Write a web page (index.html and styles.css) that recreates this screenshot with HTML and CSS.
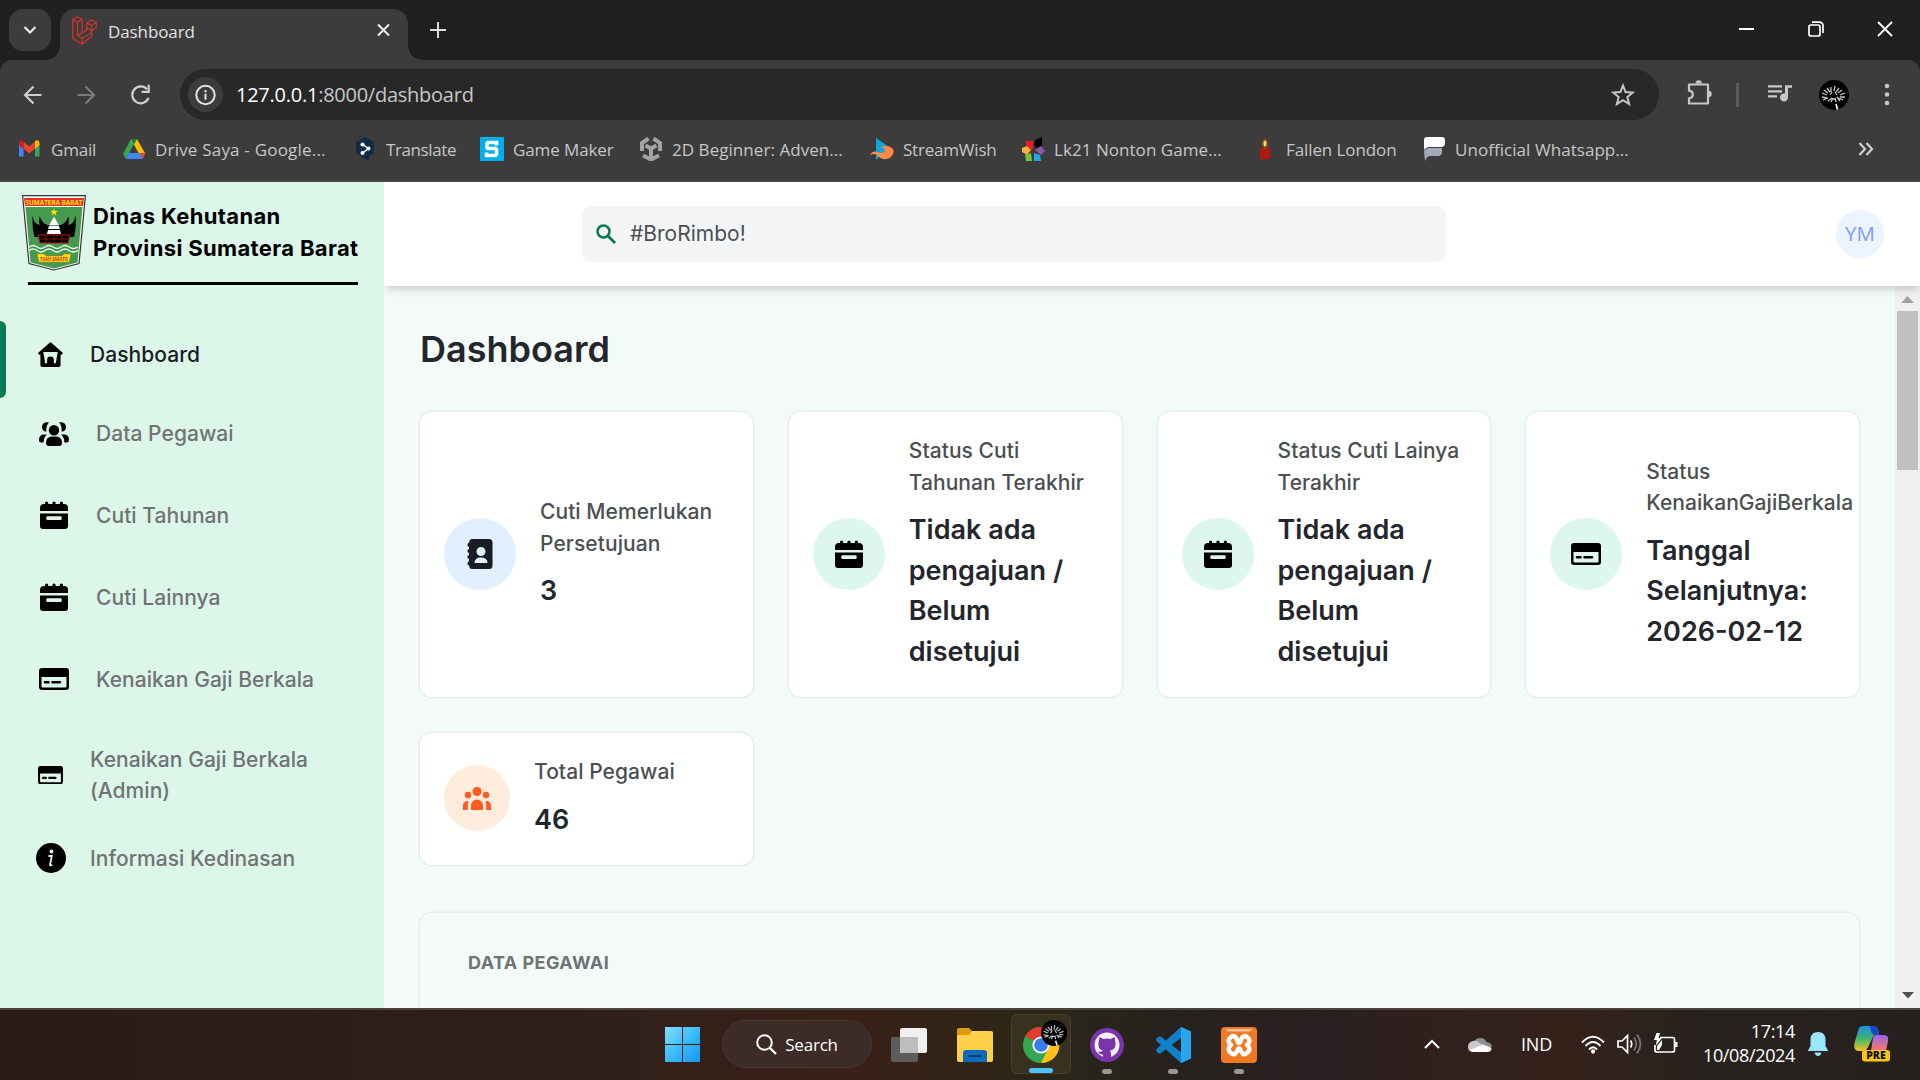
FILE: index.html
```html
<!DOCTYPE html>
<html lang="id">
<head>
<meta charset="utf-8">
<title>Dashboard</title>
<link rel="stylesheet" href="styles.css">
</head>
<body>
<svg class="defs" width="0" height="0">
  <defs>
    <symbol id="calendar" viewBox="0 0 28 28">
      <path d="M5 4.500V2a1.600 1.600 0 0 1 3.200 0V3h4.200V2a1.600 1.600 0 0 1 3.200 0V3h4.200V2A1.600 1.600 0 0 1 23 2v1h1a4 4 0 0 1 4 4v3H0V7a4 4 0 0 1 4-4h1z"/>
      <path fill-rule="evenodd" d="M0 12.500h28V25a3 3 0 0 1-3 3H3a3 3 0 0 1-3-3zM7.500 15.300a1.200 1.200 0 0 0-1.200 1.200v1.200a1.200 1.200 0 0 0 1.200 1.200h13a1.200 1.200 0 0 0 1.200-1.200v-1.200a1.200 1.200 0 0 0-1.200-1.200z"/>
    </symbol>
    <symbol id="card" viewBox="0 0 30 22">
      <path fill-rule="evenodd" d="M3 0h24a3 3 0 0 1 3 3v16a3 3 0 0 1-3 3H3a3 3 0 0 1-3-3V3a3 3 0 0 1 3-3zM2.500 9v9.500a1 1 0 0 0 1 1h23a1 1 0 0 0 1-1V9z"/>
      <path d="M6 14.300h3.500M13.500 14.300h7.500" stroke="currentColor" stroke-width="2.600" stroke-linecap="round"/>
    </symbol>
    <symbol id="bloom" viewBox="0 0 30 30">
      <circle cx="15" cy="15" r="15" fill="#000"/>
      <path d="M17 24l1.500 5.500" fill="none" stroke="#f0f0f0" stroke-width="1.800"/>
      <path d="M3 17l5 1M4 20l5-2M3 13l5 2M5 10l4 3M8 8l3 4M12 7l0 5M16 6l-1 5M20 8l-3 4M23 10l-4 3M26 13l-5 2M26 17l-5 0M24 20l-4-2M9 21l4-3M12 22l2-4M17 22l-1-4M21 21l-3-4M11 15l2-3M18 15l-2-3M13 19l4 0" fill="none" stroke="#c8c8c8" stroke-width="1.300"/>
    </symbol>
  </defs>
</svg>

<header class="tabstrip">
  <div class="tab-search"><svg width="16" height="16" viewBox="0 0 16 16"><path d="M2.500 5L8 10.500 13.500 5" fill="none" stroke="#e8e8e8" stroke-width="2.200"/></svg></div>
  <div class="tab">
    <svg width="25" height="29" viewBox="0 0 25 29" fill="none" stroke="#dd3329" stroke-width="1.100" stroke-linejoin="round"><path d="M.8 3.500L5.500 1l4.700 2.500v13.200l4.600-2.600V6.700l4.800-2.600 4.600 2.600v5.400l-4.600 2.700v5.300L10.200 28 .8 22.600zM.8 3.500L5.500 6.200l4.700-2.700M5.500 6.200v13.400l4.700 2.600 9.400-5.400M10.200 22.200V28M14.800 6.700l4.800 2.700 4.600-2.700M19.600 9.400v5.400M14.800 12.100l4.800 2.700M5.500 19.600l4.700-2.900"/></svg>
    <span class="tab-title">Dashboard</span>
    <svg width="13" height="14" viewBox="0 0 13 14"><path d="M1 1.500l11 11M12 1.500l-11 11" stroke="#eee" stroke-width="2"/></svg>
  </div>
  <svg class="new-tab" width="16" height="16" viewBox="0 0 16 16"><path d="M8 0v16M0 8h16" stroke="#ddd" stroke-width="2"/></svg>
  <div class="window-buttons">
    <svg width="16" height="16" viewBox="0 0 16 16"><path d="M0 8h15" stroke="#fff" stroke-width="2"/></svg>
    <svg width="16" height="16" viewBox="0 0 16 16" fill="none" stroke="#fff" stroke-width="1.700"><rect x="1" y="4" width="11" height="11" rx="2"/><path d="M4 1.200h7.500a3.500 3.500 0 0 1 3.500 3.500V12"/></svg>
    <svg width="16" height="16" viewBox="0 0 16 16"><path d="M1 1l14 14M15 1L1 15" stroke="#fff" stroke-width="1.800"/></svg>
  </div>
</header>

<div class="toolbar">
  <svg class="nav-btn" width="20" height="22" viewBox="0 0 20 22" fill="none" stroke="#d0d0d0" stroke-width="2.200"><path d="M18.500 11H2M10.500 2.500L2 11l8.500 8.500"/></svg>
  <svg class="nav-btn" width="20" height="22" viewBox="0 0 20 22" fill="none" stroke="#7b7b7b" stroke-width="2.200"><path d="M.5 11H17M8.500 2.500L17 11l-8.500 8.500"/></svg>
  <svg class="nav-btn" width="20" height="22" viewBox="0 0 20 22"><path d="M17.500 14A8.400 8.400 0 1 1 16 5.300" fill="none" stroke="#d0d0d0" stroke-width="2.200"/><path d="M18.800 .8V9h-8.200V6.800h6V.8z" fill="#d0d0d0"/></svg>
  <div class="omnibox">
    <span class="site-info"><svg width="21" height="24" viewBox="0 0 21 24"><circle cx="10.500" cy="12" r="9.200" fill="none" stroke="#e3e3e3" stroke-width="2"/><path d="M10.500 10.800v6M10.500 7v2.300" stroke="#e3e3e3" stroke-width="2"/></svg></span>
    <span class="url"><b>127.0.0.1</b>:8000/dashboard</span>
    <svg width="24" height="24" viewBox="0 0 24 24"><path d="M12 2.500l2.600 6.500 7.200.5-5.500 4.600 1.800 7-6.100-3.900-6.100 3.900 1.800-7-5.500-4.600 7.200-.5z" fill="none" stroke="#c7c7c7" stroke-width="2"/></svg>
  </div>
  <svg class="ext" width="26" height="26" viewBox="0 0 26 26"><path d="M3 4.500h19v19H3v-5.200c5-.6 5-7 0-7.600z" fill="none" stroke="#c7c7c7" stroke-width="2.200" stroke-linejoin="round"/><path d="M9.500 3.500a3.200 3.200 0 0 1 6.400 0zM22.500 10.800a3.200 3.200 0 0 1 0 6.400z" fill="#c7c7c7"/></svg>
  <i class="divider"></i>
  <svg class="media" width="24" height="20" viewBox="0 0 24 20"><path d="M0 2.300h14M0 7.300h14M0 12.300h9" stroke="#c7c7c7" stroke-width="2.200"/><path d="M17 1.200h7v2.600h-4v9.700a4 4 0 1 1-3-3.900z" fill="#c7c7c7"/></svg>
  <svg class="profile" width="30" height="30"><use href="#bloom"/></svg>
  <svg class="more" width="6" height="24" viewBox="0 0 6 24" fill="#c7c7c7"><circle cx="3" cy="3" r="2.300"/><circle cx="3" cy="11.500" r="2.300"/><circle cx="3" cy="20" r="2.300"/></svg>
</div>

<nav class="bookmarks">
  <a><svg viewBox="0 0 24 24"><path d="M1 7v12.500h4.500V10z" fill="#4285f4"/><path d="M21.500 7v12.500H17V10z" fill="#34a853"/><path d="M1 8V6.500a2.500 2.500 0 0 1 4.500-2v8z" fill="#c5221f"/><path d="M5.500 4.700l5.800 4.800 5.700-4.800v7l-5.700 4.500-5.800-4.500z" fill="#ea4335"/><path d="M21.500 8V6.500a2.500 2.500 0 0 0-4.500-2v7.200z" fill="#fbbc04"/></svg><span>Gmail</span></a>
  <a><svg viewBox="0 0 24 24"><path d="M9 2h6l-8 14-3 6-3-5z" fill="#34a853"/><path d="M9 2h6l8.500 15H17z" fill="#fbbc04"/><path d="M7 16h16.500l-3 6H4z" fill="#4285f4"/><path d="M18 16h5.500l-3 6z" fill="#ea4335"/><path d="M9 2h6l-3 5.500z" fill="#188038"/></svg><span class="wider">Drive Saya - Google...</span></a>
  <a><svg viewBox="0 0 24 24"><path d="M12 0l9 5v11l-5 3v5l-5-3-8-5V5z" fill="#0f2b46"/><path d="M9.500 7.500l6 4-6 4.500" stroke="#fff" fill="none" stroke-width="1.400"/><g fill="#fff"><circle cx="9.500" cy="7.500" r="2"/><circle cx="15.500" cy="11.500" r="2"/><circle cx="9.500" cy="16" r="2"/></g></svg><span class="tight">Translate</span></a>
  <a><svg viewBox="0 0 24 24"><path d="M0 0h24v24H0z" fill="#00aeef"/><path d="M16.500 8.500V5.500H8l-1 1v4l1 1h7.500l1 1v5l-1 1H6.500V15.500" fill="none" stroke="#fff" stroke-width="3.600"/></svg><span class="snug">Game Maker</span></a>
  <a><svg viewBox="0 0 24 24" fill="none" stroke="#a3a3a3" stroke-width="4"><path d="M9.500 1.500L3 6v8M14.500 1.500L21 6v8M4 18.500l8 4 8-4M12 21v-9.500L6.500 8.500M12 11.500l5.500-3"/></svg><span class="wide">2D Beginner: Adven...</span></a>
  <a><svg viewBox="0 0 24 24"><path d="M6 1l13 9-13 13z" fill="#12a7d8"/><path d="M0 18c5-8 9 1 14-3 2-2 0-4-3-5 8-3 15 2 12 7-3 7-12 6-15 2-3-3-5-2-8-1z" fill="#ff8a45"/></svg><span>StreamWish</span></a>
  <a><svg viewBox="0 0 24 24"><path d="M5 4h7v7l-2 2-5-5z" fill="#ed1c24"/><path d="M14 3l7-3v9l-5 2-3-3z" fill="#000"/><path d="M1 11l5-2 4 4-4 5-5-3z" fill="#fbb03b"/><path d="M14 13l6-4 4 5-4 4z" fill="#8e5aa8"/><path d="M10 16l1 8H5l-1-6z" fill="#7ac143"/><path d="M13 16l6 2 1 6h-7z" fill="#1cade4"/></svg><span class="wide">Lk21 Nonton Game...</span></a>
  <a><svg viewBox="0 0 24 24"><path d="M7 11l10-1v12H7z" fill="#b5140f"/><ellipse cx="12" cy="7" rx="3.500" ry="5.500" fill="#74491e"/><ellipse cx="12" cy="6.500" rx="1.500" ry="3" fill="#ffd37a"/></svg><span class="snug">Fallen London</span></a>
  <a><svg viewBox="0 0 24 24"><path d="M2 3q0-3 3-3h15q3 0 3 3v3q0 4-4 4H8q-4 0-6 3z" fill="#fff"/><path d="M2 14q2-3 5-3h13v4q0 4-4 4H8q-3 0-5 5z" fill="#a3abbb"/></svg><span class="wide">Unofficial Whatsapp...</span></a>
  <svg class="overflow" width="16" height="14" viewBox="0 0 16 14"><path d="M1.500 1l5.500 6-5.500 6M8.500 1l5.500 6-5.500 6" fill="none" stroke="#d0d0d0" stroke-width="2.200"/></svg>
</nav>

<div class="page">
  <aside class="sidebar">
    <div class="brand">
      <svg width="64" height="76" viewBox="0 0 64 76">
        <path d="M.6 .6h62.800L57 68.500 32 75 7 68.500z" fill="#fff" stroke="#333" stroke-width="1.200"/>
        <path d="M2 3h60l-1 8H3z" fill="#ee2b2b"/>
        <path d="M3.500 12h57L55.500 67.500 32 73.500 8.500 67.500z" fill="#469a50"/>
        <text x="32" y="9.600" textLength="57" lengthAdjust="spacingAndGlyphs" text-anchor="middle" class="crest-label">SUMATERA BARAT</text>
        <path d="M32 13.500l1 2.600h2.700l-2.200 1.700.9 2.700-2.400-1.700-2.400 1.700.9-2.700-2.200-1.700H31z" fill="#ffe600"/>
        <path d="M10.500 20q1 9 7 10-.5-4 0-9 2 7 8 9h13q6-2 8-9 .5 5 0 9 6-1 7-10 1 13-1.500 22h-39.500Q10 33 10.500 20z"/>
        <path d="M32 21.500l5 9h-10zM27 31h10l1 3H26zM26 35h12l1 4H25z" fill="#fff"/>
        <path d="M16 40h32l-2 8H18z" stroke="#b51216" stroke-width="1"/>
        <path d="M16 44h32M24 40v8M32 40v8M40 40v8" stroke="#b51216" stroke-width=".7"/>
        <path d="M7 52q4-3 8 0t8 0 8 0 8 0 8 0 9 0M7 55.500q4-3 8 0t8 0 8 0 8 0 8 0 9 0" fill="none" stroke="#e9fff0" stroke-width="1.300"/>
        <path d="M15 59h7l2 2h16l2-2h7l-2 8H17z" fill="#ffde17" stroke="#b98a00" stroke-width=".5"/>
        <text x="32" y="66" textLength="28" lengthAdjust="spacingAndGlyphs" text-anchor="middle" class="crest-motto">TUAH SAKATO</text>
      </svg>
      <div class="brand-name">Dinas Kehutanan<br><span>Provinsi Sumatera Barat</span></div>
    </div>
    <hr class="rule">
    <div class="menu">
      <a class="item active h78"><svg class="ic-s" viewBox="0 0 26 26"><path fill-rule="evenodd" d="M13 0l13 11.500-1.500 2L23.500 12.800V24a2 2 0 0 1-2 2h-17a2 2 0 0 1-2-2V12.800l-1 .7L0 11.500zM5.500 10.500L7.500 22h2v-3.500Q9.500 15 13 15t3.500 3.500V22h2l2-11.500z"/></svg><span>Dashboard</span></a>
      <a class="item h81"><svg class="ic-l" viewBox="0 0 30 24"><circle cx="15" cy="8.300" r="5.200"/><path d="M7 21q0-6.500 6-6.500h4q6 0 6 6.500 0 3-3 3H10q-3 0-3-3z"/><path d="M3 5.500A5 5 0 0 1 10 .6Q7 3.500 7.300 9.700A5 5 0 0 1 3 5.500zM27 5.500A5 5 0 0 0 20 .6q3 2.900 2.700 9.100A5 5 0 0 0 27 5.500zM0 18q0-5.500 5-5.500h3q-3.500 3-3.300 8H2.500Q0 20.500 0 18zM30 18q0-5.500-5-5.500h-3q3.500 3 3.300 8h2.200q2.500 0 2.500-2.500z"/></svg><span>Data Pegawai</span></a>
      <a class="item h82"><svg class="ic-l" viewBox="-1 -1 30 30"><use href="#calendar" width="28" height="28"/></svg><span>Cuti Tahunan</span></a>
      <a class="item h82"><svg class="ic-l" viewBox="-1 -1 30 30"><use href="#calendar" width="28" height="28"/></svg><span>Cuti Lainnya</span></a>
      <a class="item h82"><svg class="ic-l" viewBox="0 0 30 22"><use href="#card" width="30" height="22"/></svg><span>Kenaikan Gaji Berkala</span></a>
      <a class="item h109"><svg class="ic-s" viewBox="0 0 30 22"><use href="#card" width="30" height="22"/></svg><span>Kenaikan Gaji Berkala<br>(Admin)</span></a>
      <a class="item info h58"><svg class="ic-l" viewBox="0 0 30 30"><circle cx="15" cy="15" r="15"/><circle cx="15.500" cy="8.500" r="1.900" fill="#dcf6ea"/><path d="M12.500 13h3.300l-1.800 9q0 1 2.200-.3" fill="none" stroke="#dcf6ea" stroke-width="1.800"/></svg><span>Informasi Kedinasan</span></a>
    </div>
  </aside>

  <div class="main">
    <div class="topbar">
      <div class="search"><svg width="20" height="20" viewBox="0 0 20 20"><circle cx="7.500" cy="7.500" r="6" fill="none" stroke="#057a55" stroke-width="2.500"/><path d="M12 12l7 7" stroke="#057a55" stroke-width="2.800"/></svg><span>#BroRimbo!</span></div>
      <div class="avatar">YM</div>
    </div>
    <div class="scroll-area">
      <div class="content">
        <h1>Dashboard</h1>
        <div class="cards">
          <div class="card">
            <span class="bubble blue"><svg width="26" height="32" viewBox="0 0 26 32"><path fill="#1a1c23" fill-rule="evenodd" d="M5 1h17q3.500 0 3.500 3.500v23Q25.500 31 22 31H5q-2.500 0-3-3.500L.5 26.500v-2L2 23v-2L.5 20v-2L2 17v-2L.5 14v-2L2 11V9L.5 8V6L2 4.500Q2.500 1 5 1zM14 9a4.300 4.300 0 0 0 0 9 4.300 4.300 0 0 0 0-9zM7.500 25h13q0-5.500-6.500-5.500T7.500 25z"/></svg></span>
            <div><p>Cuti Memerlukan Persetujuan</p><strong>3</strong></div>
          </div>
          <div class="card">
            <span class="bubble green"><svg width="28" height="28"><use href="#calendar"/></svg></span>
            <div><p>Status Cuti Tahunan Terakhir</p><strong>Tidak ada pengajuan / Belum disetujui</strong></div>
          </div>
          <div class="card">
            <span class="bubble green"><svg width="28" height="28"><use href="#calendar"/></svg></span>
            <div><p>Status Cuti Lainya Terakhir</p><strong>Tidak ada pengajuan / Belum disetujui</strong></div>
          </div>
          <div class="card">
            <span class="bubble green"><svg width="30" height="22"><use href="#card"/></svg></span>
            <div><p>Status KenaikanGajiBerkala</p><strong>Tanggal Selanjutnya: 2026-02-12</strong></div>
          </div>
          <div class="card">
            <span class="bubble orange"><svg width="28" height="23" viewBox="0 0 28 23" fill="#ff5a1f"><circle cx="14" cy="4.500" r="4.500"/><circle cx="5" cy="8" r="3.200"/><circle cx="23" cy="8" r="3.200"/><path d="M8 23v-4.500a6 6 0 0 1 12 0V23zM0 23v-4.500Q0 13.700 5.500 14 4.800 16 4.800 18.500V23zM28 23v-4.500q0-4.800-5.500-4.500.7 2 .7 4.500V23z"/></svg></span>
            <div><p>Total Pegawai</p><strong>46</strong></div>
          </div>
        </div>
        <section class="panel"><h2>Data Pegawai</h2></section>
      </div>
      <div class="scrollbar">
        <svg width="13" height="7" viewBox="0 0 13 7"><path d="M0 7l6.500-7L13 7z" fill="#a3a3a3"/></svg>
        <i class="thumb"></i>
        <svg width="12" height="7" viewBox="0 0 12 7"><path d="M0 0h12L6 6.500z" fill="#505050"/></svg>
      </div>
    </div>
  </div>
</div>

<footer class="taskbar">
  <div class="apps">
    <span class="app start"><svg width="35" height="35" viewBox="0 0 35 35"><defs><linearGradient id="win" x1="0" y1="0" x2="1" y2="1"><stop offset="0" stop-color="#86dcff"/><stop offset=".5" stop-color="#3bbcf8"/><stop offset="1" stop-color="#1296f5"/></linearGradient></defs><path d="M0 0h17v17H0zM18 0h17v17H18zM0 18h17v17H0zM18 18h17v17H18z" fill="url(#win)"/></svg></span>
    <span class="task-search"><svg width="21" height="21" viewBox="0 0 21 21"><circle cx="8.500" cy="8.500" r="7.300" fill="none" stroke="#fff" stroke-width="2"/><path d="M13.700 13.700l6.300 6.300" stroke="#fff" stroke-width="2.300"/></svg>Search</span>
    <span class="app"><svg width="36" height="34" viewBox="0 0 36 34"><rect y="9" width="27" height="25" rx="2" fill="#5c5c5c"/><rect x="9" width="27" height="25" rx="2" fill="#f0f0f0"/><path d="M9 9h18v16H9z" fill="#bdbdbd"/></svg></span>
    <span class="app"><svg width="36" height="34" viewBox="0 0 36 34"><path d="M0 2q0-2 2-2h10l4 4v6H0z" fill="#dc9c0c"/><path d="M0 7h12l3-4h19q2 0 2 2v27q0 2-2 2H2q-2 0-2-2z" fill="#ffd04a"/><path d="M6 34V25q0-3 3-3h18q3 0 3 3v9z" fill="#0f6cbd"/><path d="M11 28h14" stroke="#063f74" stroke-width="2"/></svg></span>
    <span class="app current"><svg width="46" height="44" viewBox="0 0 46 44"><g transform="translate(19 26)"><circle r="18" fill="#34a853"/><path d="M0 0L-15.600-9A18 18 0 0 1 15.600-9L8-8z" fill="#e33b2e"/><path d="M0 0V-8h16.500A18 18 0 0 1 0 18l7-14z" fill="#fbc116"/><circle r="8.600" fill="#fff"/><circle r="6.800" fill="#3b7ded"/></g><use href="#bloom" x="19" y="1" width="26" height="26"/></svg></span>
    <span class="app running"><svg width="34" height="34" viewBox="0 0 34 34"><circle cx="17" cy="17" r="17" fill="#7b35ab"/><circle cx="17" cy="17" r="12.500" fill="#f4f0f7"/><path d="M9.500 9l4 2q3.500-1 7 0l4-2 .8 5q1.500 7-5.300 8.500 1 1.500 1 3V30h-8v-3.500q-4 .5-5-3 3 1 5-.9Q7 21 8.700 14z" fill="#7b35ab"/></svg></span>
    <span class="app running"><svg width="36" height="36" viewBox="0 0 36 36"><path d="M26 0l10 4.500v27L26 36 2 14.500q-2-1.500 0-3.500l1.500-1.200q1-.8 2.500 0L27 26V10L6 26q-1.500 1-2.500.2L2 25q-2-2 0-3.500z" fill="#1180c8"/><path d="M26 0l10 4.500v27L26 36z" fill="#2aa5f2"/></svg></span>
    <span class="app running"><svg width="36" height="36" viewBox="0 0 36 36"><rect width="36" height="36" rx="4" fill="#f07a24"/><path d="M4 2h28l-3 2.500H7z" fill="#f8c197"/><path d="M10 10q4-3 6 3t4 0 6-3q5 4 0 8 5 4 0 8-4 3-6-2t-4 0-6 2q-5-4 0-8-5-4 0-8z" fill="none" stroke="#fff" stroke-width="4.500" stroke-linejoin="round"/></svg></span>
  </div>
  <div class="tray">
    <svg width="16" height="10" viewBox="0 0 16 10"><path d="M1 9l7-7 7 7" fill="none" stroke="#fff" stroke-width="2"/></svg>
    <svg class="cloud" width="24" height="16" viewBox="0 0 24 16"><path d="M6 5.500A7 7 0 0 1 18.500 6Q24 7 24 11L10 14z" fill="#8f8f8f"/><path d="M5 5a6 6 0 0 1 6 1.500l8 5L4 16q-4-1-4-5.500T5 5z" fill="#c9c9c9"/><path d="M2 14l13-5.500 8.500 3.500q0 4-4.500 4H5q-2 0-3-2z" fill="#fff"/></svg>
    <span class="lang">IND</span>
    <svg class="wifi" width="24" height="19" viewBox="0 0 24 19" fill="none" stroke="#fff" stroke-width="1.900"><path d="M1 7.500q11-11.500 22 0M4.500 11q7.500-8 15 0M8 14.500q4-4.500 8 0"/><circle cx="12" cy="16.500" r="1.200" fill="#fff"/></svg>
    <svg class="sound" width="25" height="22" viewBox="0 0 25 22" fill="none" stroke="#fff" stroke-width="1.700"><path d="M1 8h4l5.500-5.500v17L5 14H1zM13.500 7.500q2.500 3.500 0 7"/><path d="M17 4.500q4.500 6.500 0 13M20 1.500q7 9.500 0 19" stroke="#777"/></svg>
    <svg class="battery" width="25" height="21" viewBox="0 0 25 21"><path d="M7 4.500h12.500q2 0 2 2v10.500q0 2-2 2H4q-2 0-2-2V12" fill="none" stroke="#fff" stroke-width="1.700"/><path d="M22 9h2.500v5H22zM4 17V13l5-6v5l-3 5zM3.500 0L1 7h3l-1.500 6L9 5H5.500L7 0z" fill="#fff"/></svg>
    <div class="clock">17:14<br><span>10/08/2024</span></div>
    <svg class="bell" width="20" height="24" viewBox="0 0 20 24" fill="#99e6ff"><path d="M10 0q7.500 0 7.500 8v6l2.500 4.500V19H0v-.5L2.500 14V8Q2.500 0 10 0zM6.500 20.500h7q-1 3.500-3.500 3.500t-3.500-3.500z"/></svg>
    <svg class="copilot" width="36" height="36" viewBox="0 0 36 36"><defs><linearGradient id="cpa" x1="0" y1="0" x2="0" y2="1"><stop offset="0" stop-color="#1f8fe8"/><stop offset=".5" stop-color="#3fb56f"/><stop offset="1" stop-color="#f4c51d"/></linearGradient><linearGradient id="cpb" x1="0" y1="0" x2="0" y2="1"><stop offset="0" stop-color="#9a63f0"/><stop offset="1" stop-color="#ff7a58"/></linearGradient></defs><path d="M9 0h10q5 0 6 8l-5 1-5 10q-2 6-7 6H5Q-1 25 .5 17L4 5q1-5 5-5z" fill="url(#cpa)"/><path d="M16 0h4q4 0 5 9h-4q-4 0-5-9z" fill="#1746c9"/><path d="M22 9h8q5 0 4 6l-2 10H17l2-13q1-3 3-3z" fill="url(#cpb)"/><rect x="8" y="24" width="28" height="11.500" rx="3" fill="#fdc60b"/><text x="22" y="33" text-anchor="middle" class="pre">PRE</text></svg>
  </div>
</footer>
</body>
</html>
```
FILE: styles.css
```css
* { box-sizing: border-box; }
body {
  margin: 0;
  width: 1920px;
  height: 1080px;
  overflow: hidden;
  display: flex;
  flex-direction: column;
  background: #1f2121;
  font-family: "Open Sans", "Noto Sans", sans-serif;
}
svg { flex: none; display: block; }
.defs { position: absolute; }

/* Browser chrome */
.tabstrip { height: 60px; flex: none; display: flex; align-items: flex-start; padding: 9px 20px 0 9px; background: #1f2121; }
.tab-search { width: 42px; height: 42px; border-radius: 14px; background: #3c3c3c; display: flex; align-items: center; justify-content: center; }
.tab-search svg { margin-top: -1px; }
.tab { position: relative; width: 348px; height: 51px; margin-left: 9px; padding: 0 18px 9px 12px; background: #3c3c3c; border-radius: 15px 15px 0 0; display: flex; align-items: center; }
.tab::before, .tab::after { content: ""; position: absolute; bottom: 0; width: 14px; height: 14px; }
.tab::before { left: -14px; background: radial-gradient(circle at 0 0, transparent 13.500px, #3c3c3c 14px); }
.tab::after { right: -14px; background: radial-gradient(circle at 100% 0, transparent 13.500px, #3c3c3c 14px); }
.tab-title { flex: 1; margin-left: 11px; padding-top: 2px; font-size: 17px; letter-spacing: -.1px; color: #e3e3e3; }
.new-tab { margin: 13px 0 0 22px; }
.window-buttons { display: flex; gap: 53px; margin: 12px 7px 0 auto; }

.toolbar { height: 69px; flex: none; display: flex; align-items: center; padding: 0 30px 0 23px; background: #3c3c3c; border-radius: 12px 12px 0 0; }
.nav-btn { margin-right: 34px; }
.nav-btn:nth-child(3) { margin-right: 29px; }
.omnibox { width: 1479px; height: 51px; flex: none; border-radius: 26px; background: #282828; display: flex; align-items: center; padding: 0 24px 0 8px; }
.site-info { width: 35px; height: 35px; border-radius: 50%; background: #3c3c3c; display: flex; align-items: center; justify-content: center; }
.url { flex: 1; margin-left: 13px; font-size: 20px; letter-spacing: -.25px; color: #c7c7c7; }
.url b { font-weight: 400; color: #fff; }
.ext { margin: -3px 0 0 27px; }
.divider { width: 3px; height: 24px; margin: 0 29px 0 24px; background: #5c5c5c; border-radius: 1px; }
.media { margin-right: 27px; margin-top: -2px; }
.profile { margin-right: auto; }

.bookmarks { height: 53px; flex: none; display: grid; grid-template-columns: 104px 231px 127px 159px 231px 151px 232px 169px 1fr 16px; align-items: center; padding: 0 46px 11px 18px; background: #3c3c3c; border-bottom: 2px solid #484646; }
.bookmarks a { display: flex; align-items: center; gap: 9px; white-space: nowrap; font-size: 17px; letter-spacing: -.2px; color: #c7c7c7; }
.bookmarks a svg { width: 24px; height: 24px; }
.bookmarks .wider { letter-spacing: .2px; }
.bookmarks .wide { letter-spacing: .05px; }
.bookmarks .snug { letter-spacing: -.1px; }
.bookmarks .tight { letter-spacing: -.4px; }

/* Application */
.page { height: 826px; flex: none; display: flex; font-family: Inter, "Liberation Sans", sans-serif; }
.sidebar { width: 384px; flex: none; background: #dcf6ea; }
.brand { display: flex; padding: 13px 0 0 22px; }
.brand svg { margin-right: 7px; overflow: visible; }
.brand-name { padding-top: 5px; font-weight: 700; font-size: 22px; line-height: 32px; color: #000; white-space: nowrap; letter-spacing: .35px; }
.crest-label { font: 700 7px "Open Sans", sans-serif; fill: #ffe600; }
.crest-motto { font: 700 5px "Open Sans", sans-serif; fill: #c5221f; }
.rule { width: 330px; height: 3px; margin: 11px 0 0 28px; border: 0; background: #000; }
.menu { padding-top: 30px; }
.item { position: relative; display: flex; align-items: center; padding-left: 39px; gap: 27px; font-size: 21px; line-height: 31px; font-weight: 550; letter-spacing: .05px; color: #707275; white-space: nowrap; }
.item svg { fill: #000; color: #000; }
.item.active { color: #1a1c23; }
.item.active::before { content: ""; position: absolute; left: 0; top: 6px; width: 6px; height: 77px; border-radius: 0 6px 6px 0; background: #057a55; }
.ic-s { width: 25px; margin: 1px 1px 0 -1px; }
.ic-s + span { margin-left: -1px; }
.ic-l { width: 30px; }
.item.info { padding-left: 36px; gap: 24px; }
.h58 { height: 58px; }
.h78 { height: 78px; }
.h81 { height: 81px; }
.h82 { height: 82px; }
.h109 { height: 109px; }

.main { width: 1536px; display: flex; flex-direction: column; }
.topbar { position: relative; height: 104px; flex: none; display: flex; align-items: center; padding: 0 36px 0 198px; background: #fff; box-shadow: 0 6px 9px -1.500px rgba(0,0,0,.1), 0 3px 6px -1.500px rgba(0,0,0,.08); clip-path: inset(0 0 -20px 0); }
.search { width: 864px; height: 56px; border-radius: 9px; background: #f4f5f7; display: flex; align-items: center; gap: 14px; padding: 0 0 1px 14px; font-size: 21px; color: #4c4f52; }
.avatar { width: 48px; height: 48px; margin-left: auto; border-radius: 50%; background: #ebf4ff; color: #7f9cf5; font: 20.500px/47px "Open Sans", sans-serif; text-align: center; }
.scroll-area { flex: 1; min-height: 0; display: flex; background: #f4faf8; }
.content { width: 1511px; padding: 0 36px; overflow: hidden; }
h1 { margin: 36px 0; font-size: 36px; line-height: 54px; font-weight: 600; color: #24262d; }
.cards { display: grid; grid-template-columns: repeat(4, minmax(0, 1fr)); gap: 36px; margin-bottom: 48px; }
.card { display: flex; align-items: center; gap: 24px; padding: 23.400px 24px 24.600px; background: #fff; border-radius: 12px; box-shadow: 0 0 0 1.500px rgba(0,0,0,.05); }
.bubble { width: 72px; height: 72px; flex: none; border-radius: 50%; display: flex; align-items: center; justify-content: center; }
.blue { background: #e1effe; }
.green { background: #def7ec; }
.orange { background: #feecdc; width: 66px; height: 66px; }
.card div { min-width: 0; }
.card p { margin: 0 0 12px; font-size: 21px; line-height: 31.500px; font-weight: 450; letter-spacing: .06px; color: #4c4f52; }
.card strong { display: block; font-size: 27px; line-height: 40.500px; font-weight: 600; color: #24262d; }
.panel { height: 300px; border-radius: 12px; box-shadow: 0 0 0 1.500px rgba(0,0,0,.05); padding: 36px 48px; }
h2 { margin: 0; font-size: 18px; line-height: 27px; letter-spacing: .45px; font-weight: 650; text-transform: uppercase; color: #707275; }
.scrollbar { width: 25px; padding: 10px 2px 9px; display: flex; flex-direction: column; align-items: center; background: #f0f0f0; }
.thumb { width: 21px; height: 159px; margin: 8px 0 auto; background: #c1c1c1; }

/* Desktop taskbar */
.taskbar { height: 72px; flex: none; display: flex; justify-content: space-between; padding: 4px 30px 0 653px; border-top: 2px solid #4b413d; color: #fff; background: linear-gradient(90deg, #2a1d15 0, #30201a 600px, #3a2018 850px, #2c2617 1020px, #26221f 1180px, #2b2021 1330px, #35211a 1560px, #28221f 1700px, #26211f 100%); }
.apps { display: flex; gap: 6px; height: 60px; }
.app { position: relative; width: 60px; height: 60px; display: flex; align-items: center; justify-content: center; }
.app svg { margin-top: 1px; }
.app.start svg { margin-left: -2px; }
.task-search { width: 150px; height: 48px; margin: 6px 1px 0 3px; border-radius: 24px; border: 1px solid #48352f; background: #3c2b26; display: flex; align-items: center; justify-content: center; gap: 8px; font-size: 17px; letter-spacing: -.2px; }
.current { border: 1px solid #48402f; border-radius: 6px; background: #39311f; }
.current svg { margin: -6px 0 0 8px; }
.app.current::after, .running::after { content: ""; position: absolute; bottom: 0; left: 50%; width: 24px; height: 5px; margin-left: -12px; border-radius: 3px; background: #4cc2ff; }
.running::after { width: 10px; margin-left: -5px; background: #9a9694; }
.tray { display: flex; align-items: center; height: 60px; }
.tray > svg:first-child { margin-left: -1px; }
.cloud { margin-left: 28px; }
.lang { width: 32px; margin-left: 29px; font-size: 18px; letter-spacing: -.2px; }
.wifi { margin-left: 28px; }
.sound { margin-left: 12px; }
.battery { margin: -2px 0 0 11px; }
.clock { width: 100px; margin: -2px 0 0 17px; text-align: right; font-size: 18px; line-height: 24px; letter-spacing: -.35px; }
.bell { margin-left: 13px; }
.copilot { margin-left: 26px; }
.pre { font: 800 10.500px "Open Sans", sans-serif; fill: #111; }
```
